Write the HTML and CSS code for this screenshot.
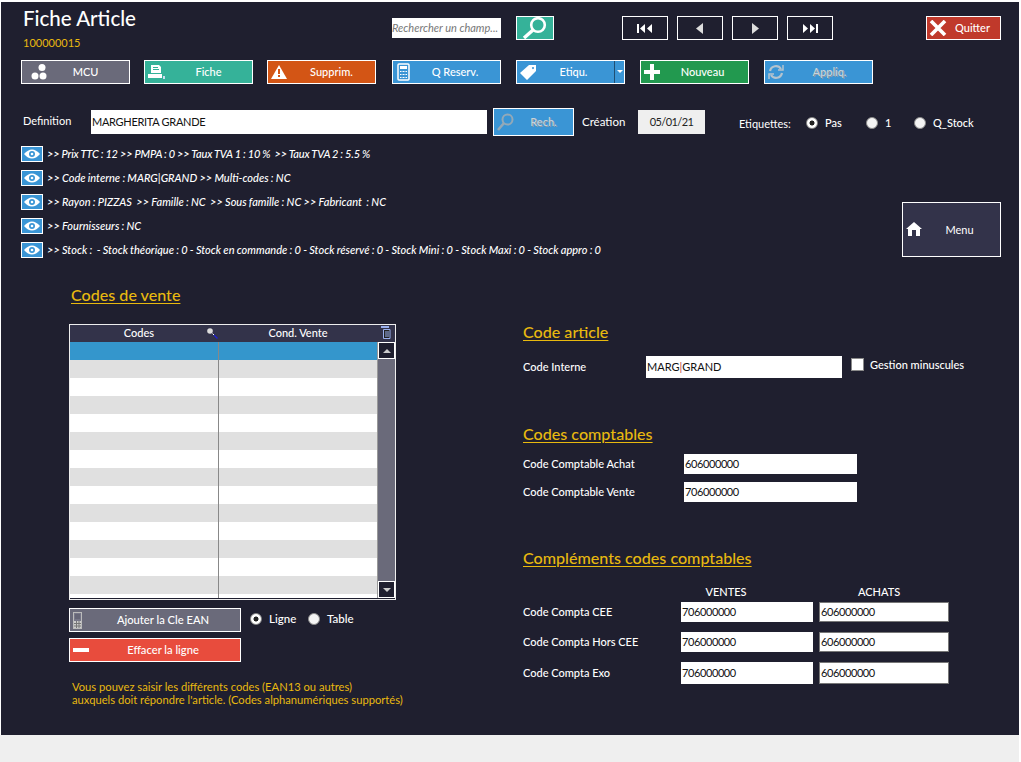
FILE: index.html
```html
<!DOCTYPE html>
<html>
<head>
<meta http-equiv="Content-Type" content="text/html; charset=utf-8"/>
<title>Fiche Article</title>
<link rel="stylesheet" href="styles.css">
</head>
<body>
<div class="panel">

  <div class="top">
    <div class="titles">
      <h1>Fiche Article</h1>
      <div class="ref">100000015</div>
    </div>
    <div class="search-field">Rechercher un champ...</div>
    <button class="btn-find">
      <svg width="36" height="22" viewBox="0 0 36 22"><circle cx="21" cy="8" r="6.800" fill="none" stroke="#fff" stroke-width="2.600"/><path d="M16 13 L7 21" stroke="#fff" stroke-width="3.400"/></svg>
    </button>
    <div class="nav">
      <button class="btn-nav"><svg width="16" height="9" viewBox="0 0 16 9"><path d="M0 0h2v9H0zM8 0v9L3 4.500zM15 0v9L10 4.500z" fill="#fff"/></svg></button>
      <button class="btn-nav"><svg width="8" height="11" viewBox="0 0 8 11"><path d="M7 0v11L0 5.500z" fill="#ddd"/></svg></button>
      <button class="btn-nav"><svg width="8" height="11" viewBox="0 0 8 11"><path d="M1 0v11l7-5.500z" fill="#ddd"/></svg></button>
      <button class="btn-nav"><svg width="16" height="9" viewBox="0 0 16 9"><path d="M1 0v9l5-4.500zM8 0v9l5-4.500zM14 0h2v9h-2z" fill="#fff"/></svg></button>
    </div>
    <button class="btn btn-quit">
      <svg class="ico" width="18" height="16" viewBox="0 0 18 16"><path d="M2 1 L16 15 M16 1 L2 15" stroke="#fff" stroke-width="3.600"/></svg>
      <span>Quitter</span>
    </button>
  </div>

  <div class="actions">
    <button class="btn grey">
      <svg class="ico mcu" width="18" height="16" viewBox="0 0 18 16" fill="#fff"><circle cx="12" cy="3.500" r="3.500"/><circle cx="5" cy="12" r="3.500"/><circle cx="13" cy="12" r="3.500"/></svg>
      <span>MCU</span>
    </button>
    <button class="btn teal">
      <svg class="ico" width="18" height="16" viewBox="0 0 18 16"><path d="M4 1h8l2 2v6H4z" fill="#fff"/><path d="M6 3.500h5M6 5.500h6" stroke="#35b299"/><path d="M1 10h14v4H1z" fill="#fff"/><path d="M16 12h2v3h-2z" fill="#cde"/></svg>
      <span>Fiche</span>
    </button>
    <button class="btn orange">
      <svg class="ico" width="18" height="16" viewBox="0 0 18 16"><path d="M9 1 L17 15 H1z" fill="#fff"/><path d="M8 5h2v5H8zM8 11h2v2H8z" fill="#d35515"/></svg>
      <span>Supprim.</span>
    </button>
    <button class="btn blue">
      <svg class="ico calc" width="14" height="18" viewBox="0 0 14 18"><rect x="1" y="1" width="11" height="16" rx="1" fill="none" stroke="#fff" stroke-width="1.500"/><path d="M3 3h7v3H3z" fill="#fff"/><path d="M3 8h7v1H3zM3 11h7v1H3zM3 14h7v1H3z" fill="#fff"/><path d="M5 8v7M8 8v7" stroke="#3a95d5"/></svg>
      <span>Q Reserv.</span>
    </button>
    <button class="btn blue btn-split">
      <svg class="ico" width="18" height="16" viewBox="0 0 18 16"><path d="M10 1h7v6l-9 9-7-7zM14 3a1 1 0 1 0 .01 0z" fill="#fff" fill-rule="evenodd"/></svg>
      <span>Etiqu.</span>
      <i class="caret"></i>
    </button>
    <button class="btn green">
      <svg class="ico" width="18" height="16" viewBox="0 0 18 16"><path d="M7 0h4v6h6v4h-6v6H7v-6H1V6h6z" fill="#fff"/></svg>
      <span>Nouveau</span>
    </button>
    <button class="btn blue off">
      <svg class="ico" width="18" height="16" viewBox="0 0 18 16" fill="none" stroke="#b5c4ce" stroke-width="2.200"><path d="M3 7a6 6 0 0 1 11-2"/><path d="M15 9a6 6 0 0 1-11 2"/><path d="M11 6h5V1M7 10H2v5" stroke-width="1.500"/></svg>
      <span>Appliq.</span>
    </button>
  </div>

  <div class="defrow">
    <label class="def-label">Definition</label>
    <div class="field def-input">MARGHERITA GRANDE</div>
    <button class="btn blue off btn-rech">
      <svg class="ico" width="18" height="18" viewBox="0 0 18 18"><circle cx="10.500" cy="6.500" r="5" fill="none" stroke="#93a9b8" stroke-width="2"/><path d="M7 10 L1 17" stroke="#93a9b8" stroke-width="2.600"/></svg>
      <span>Rech.</span>
    </button>
    <label class="creat-label">Création</label>
    <div class="date">05/01/21</div>
    <label class="etq-label">Etiquettes:</label>
    <div class="radios">
      <span class="radio-item w-pas"><i class="radio on"></i>Pas</span>
      <span class="radio-item w-one"><i class="radio"></i>1</span>
      <span class="radio-item"><i class="radio"></i>Q_Stock</span>
    </div>
  </div>

  <div class="infos">
    <div class="info-list">
      <div class="info info-tight">
        <button class="eye"><svg width="16" height="12" viewBox="0 0 16 12"><path d="M0 6q8-9 16 0q-8 9-16 0z" fill="#fff"/><circle cx="8" cy="6" r="3" fill="#3a95d5"/><circle cx="8" cy="6" r="1.300" fill="#fff"/></svg></button>
        <span>&gt;&gt; Prix TTC : 12 &gt;&gt; PMPA : 0 &gt;&gt; Taux TVA 1 : 10 % &nbsp;&gt;&gt; Taux TVA 2 : 5.5 %</span>
      </div>
      <div class="info">
        <button class="eye"><svg width="16" height="12" viewBox="0 0 16 12"><path d="M0 6q8-9 16 0q-8 9-16 0z" fill="#fff"/><circle cx="8" cy="6" r="3" fill="#3a95d5"/><circle cx="8" cy="6" r="1.300" fill="#fff"/></svg></button>
        <span>&gt;&gt; Code interne : MARG|GRAND &gt;&gt; Multi-codes : NC</span>
      </div>
      <div class="info">
        <button class="eye"><svg width="16" height="12" viewBox="0 0 16 12"><path d="M0 6q8-9 16 0q-8 9-16 0z" fill="#fff"/><circle cx="8" cy="6" r="3" fill="#3a95d5"/><circle cx="8" cy="6" r="1.300" fill="#fff"/></svg></button>
        <span>&gt;&gt; Rayon : PIZZAS &nbsp;&gt;&gt; Famille : NC &nbsp;&gt;&gt; Sous famille : NC &gt;&gt; Fabricant &nbsp;: NC</span>
      </div>
      <div class="info">
        <button class="eye"><svg width="16" height="12" viewBox="0 0 16 12"><path d="M0 6q8-9 16 0q-8 9-16 0z" fill="#fff"/><circle cx="8" cy="6" r="3" fill="#3a95d5"/><circle cx="8" cy="6" r="1.300" fill="#fff"/></svg></button>
        <span>&gt;&gt; Fournisseurs : NC</span>
      </div>
      <div class="info">
        <button class="eye"><svg width="16" height="12" viewBox="0 0 16 12"><path d="M0 6q8-9 16 0q-8 9-16 0z" fill="#fff"/><circle cx="8" cy="6" r="3" fill="#3a95d5"/><circle cx="8" cy="6" r="1.300" fill="#fff"/></svg></button>
        <span>&gt;&gt; Stock : &nbsp;- Stock théorique : 0 - Stock en commande : 0 - Stock réservé : 0 - Stock Mini : 0 - Stock Maxi : 0 - Stock appro : 0</span>
      </div>
    </div>
    <button class="btn-menu">
      <svg width="16" height="15" viewBox="0 0 16 15"><path d="M8 0 L16 7 H14 V14 H2 V7 H0z" fill="#fff"/><path d="M6 8h4v6H6z" fill="#33334a"/></svg>
      <span>Menu</span>
    </button>
  </div>

  <div class="lower">
    <div class="col-left">
      <h2 class="head head-vente">Codes de vente</h2>
      <div class="tbl">
        <div class="tbl-head">
          <div class="th th-codes"><span class="th-txt">Codes</span>
            <svg class="th-ico" width="11" height="11" viewBox="0 0 11 11"><circle cx="3" cy="3" r="2.800" fill="#ddd"/><path d="M5.500 5.500 L10 10" stroke="#fff" stroke-width="1"/><path d="M7 7 L10.500 10.500" stroke="#22c" stroke-width="1.500"/></svg>
          </div>
          <div class="th th-cond">Cond. Vente</div>
          <svg class="th-del" width="10" height="13" viewBox="0 0 10 13"><path d="M0 0h8v2H0z" fill="#9ab0ee"/><path d="M2.500 3.500h6.500v9H2.500z" fill="#222" stroke="#9ab0ee"/><path d="M4 6h4M4 8h4M4 10h4" stroke="#9ab0ee"/></svg>
        </div>
        <div class="tbl-body">
          <div class="rows">
            <div class="row sel"></div>
            <div class="row alt"></div>
            <div class="row"></div>
            <div class="row alt"></div>
            <div class="row"></div>
            <div class="row alt"></div>
            <div class="row"></div>
            <div class="row alt"></div>
            <div class="row"></div>
            <div class="row alt"></div>
            <div class="row"></div>
            <div class="row alt"></div>
            <div class="row"></div>
            <div class="row alt"></div>
            <div class="row end"></div>
          </div>
          <div class="scroll">
            <div class="sb-btn"><i class="arr-up"></i></div>
            <div class="sb-btn"><i class="arr-down"></i></div>
          </div>
        </div>
      </div>
      <div class="under">
        <div class="under-btns">
          <button class="btn grey btn-wide">
            <svg class="ico" width="12" height="18" viewBox="0 0 12 18"><rect x="1.500" y="0.500" width="8" height="16" fill="#777788" stroke="#bbb"/><path d="M3 2h5v5H3z" fill="#666677"/><path d="M2 9h7v7H2z" fill="#ccc"/><path d="M2 11.500h7M2 14h7M4.500 9v7M7 9v7" stroke="#777"/></svg>
            <span>Ajouter la Cle EAN</span>
          </button>
          <button class="btn red btn-wide">
            <svg class="ico" width="18" height="16" viewBox="0 0 18 16"><path d="M1 6h16v4H1z" fill="#fff"/></svg>
            <span>Effacer la ligne</span>
          </button>
        </div>
        <div class="radios radios-sm">
          <span class="radio-item w-ligne"><i class="radio on"></i>Ligne</span>
          <span class="radio-item"><i class="radio"></i>Table</span>
        </div>
      </div>
      <p class="note">Vous pouvez saisir les différents codes (EAN13 ou autres)<br>auxquels doit répondre l'article. (Codes alphanumériques supportés)</p>
    </div>

    <div class="col-right">
      <h2 class="head head-article">Code article</h2>
      <div class="form-row row-interne">
        <label class="lbl w-interne">Code Interne</label>
        <div class="field f-interne">MARG<em class="pipe">|</em>GRAND</div>
        <i class="check"></i>
        <span class="lbl check-lbl">Gestion minuscules</span>
      </div>

      <h2 class="head head-compta">Codes comptables</h2>
      <div class="form-row row-achat">
        <label class="lbl w-compta">Code Comptable Achat</label>
        <div class="field f-compta">606000000</div>
      </div>
      <div class="form-row row-vente">
        <label class="lbl w-compta">Code Comptable Vente</label>
        <div class="field f-compta">706000000</div>
      </div>

      <h2 class="head head-compl">Compléments codes comptables</h2>
      <div class="grid-compl">
        <span></span><span class="colhead">VENTES</span><span class="colhead">ACHATS</span>
        <label class="lbl">Code Compta CEE</label>
        <div class="field">706000000</div>
        <div class="field boxed">606000000</div>
        <label class="lbl">Code Compta Hors CEE</label>
        <div class="field">706000000</div>
        <div class="field boxed">606000000</div>
        <label class="lbl">Code Compta Exo</label>
        <div class="field tall">706000000</div>
        <div class="field boxed tall">606000000</div>
      </div>
    </div>
  </div>

</div>
<div class="strip"></div>
</body>
</html>
```

FILE: styles.css
```css
html, body {
  margin: 0;
  height: 100%;
}

body {
  background-color: #fff;
  font-family: Lato, sans-serif;
  font-size: 11px;
  color: #fff;
  overflow: hidden;
  padding-top: 2px;
  box-sizing: border-box;
  height: 762px;
}

button {
  font-family: Lato, sans-serif;
  padding: 0;
  cursor: pointer;
}

.panel {
  background-color: #1f1f2f;
  margin: 0 2px 0 1px;
  height: 733px;
  position: relative;
  box-sizing: border-box;
}

.strip {
  height: 27px;
  margin-right: 2px;
  background-color: #efefef;
}

/* top bar */
.top {
  display: flex;
  align-items: flex-start;
  height: 58px;
  padding-left: 22px;
}

.titles {
  width: 369px;
  padding-top: 3px;
}

h1 {
  font-size: 20.5px;
  font-weight: 500;
  line-height: 26px;
  margin: 0;
}

.ref {
  font-size: 11px;
  color: #e8b90f;
  margin-top: 5px;
  line-height: 14px;
}

.search-field {
  margin-top: 16px;
  width: 109px;
  height: 20px;
  background: #fff;
  color: #777;
  font-style: italic;
  font-size: 11px;
  line-height: 20px;
  overflow: hidden;
  white-space: nowrap;
}

.btn-find {
  margin: 14px 0 0 15px;
  width: 38px;
  height: 24px;
  background: #35b299;
  border: 1px solid #fff;
  display: flex;
  align-items: center;
  justify-content: center;
}

.nav {
  display: flex;
  gap: 9px;
  margin: 14px 0 0 68px;
}

.btn-nav {
  width: 46px;
  height: 24px;
  background: transparent;
  border: 1px solid #fff;
  display: flex;
  align-items: center;
  justify-content: center;
}

.btn {
  position: relative;
  display: flex;
  align-items: center;
  justify-content: center;
  box-sizing: border-box;
  width: 109px;
  height: 24px;
  padding-bottom: 2px;
  border: 1px solid #fff;
  color: #fff;
  font-size: 11px;
  font-weight: 500;
}

.btn .ico {
  position: absolute;
  left: 2px;
  top: 3px;
}

.btn .ico.mcu {
  left: 8px;
}

.btn .ico.calc {
  left: 4px;
  top: 2px;
}

.btn-quit {
  width: 75px;
  margin: 14px 0 0 93px;
  background: #c0392b;
  padding-left: 18px;
  font-size: 11px;
}

.grey { background: #6a6a7a; }
.teal { background: #35b299; }
.orange { background: #d35515; }
.blue { background: #3a95d5; }
.green { background: #22994f; }
.red { background: #e84c3d; }

.off span {
  color: #c5d3dc;
  text-shadow: 1px 1px 0 #8a9aa6;
}

/* action buttons */
.actions {
  display: flex;
  height: 24px;
  padding-left: 20px;
}

.actions .btn {
  margin-right: 14px;
  padding-left: 20px;
}

.actions .btn:nth-child(3) {
  margin-right: 16px;
}

.actions .btn:nth-child(4) {
  margin-right: 15px;
  padding-left: 17px;
}

.actions .btn:nth-child(5) {
  margin-right: 15px;
}

.actions .btn:nth-child(6) {
  margin-right: 15px;
  padding-left: 16px;
}

.actions .btn:nth-child(7) {
  padding-left: 22px;
}

.actions .btn-split {
  padding-right: 14px;
}

.caret {
  position: absolute;
  right: 0;
  top: 0;
  bottom: 0;
  width: 9px;
  border-left: 1px solid #1f4f74;
}

.caret::after {
  content: "";
  position: absolute;
  left: 2px;
  top: 9px;
  border: 3px solid transparent;
  border-top: 3px solid #fff;
}

/* definition row */
.defrow {
  display: flex;
  align-items: center;
  height: 28px;
  margin-top: 24px;
  padding-left: 22px;
}

.def-label {
  width: 68px;
  margin-top: -3px;
}

.field {
  background: #fff;
  color: #111;
  height: 20px;
  line-height: 20px;
  padding-left: 1px;
  box-sizing: border-box;
  font-size: 11px;
  letter-spacing: -0.4px;
  white-space: nowrap;
}

.def-input {
  width: 396px;
  height: 24px;
  line-height: 24px;
  letter-spacing: -0.3px;
}

.btn-rech {
  width: 81px;
  height: 28px;
  margin-left: 6px;
  padding-left: 20px;
}

.btn-rech .ico {
  left: 3px;
  top: 4px;
}

.creat-label {
  margin-left: 8px;
  width: 56px;
  margin-top: -2px;
  font-size: 11.5px;
}

.date {
  width: 67px;
  height: 24px;
  line-height: 24px;
  background: #efefef;
  color: #222;
  text-align: center;
  letter-spacing: -0.6px;
}

.etq-label {
  margin-left: 34px;
  width: 67px;
  margin-top: 2px;
}

.radios {
  display: flex;
  align-items: center;
  font-weight: 500;
  margin-top: 1px;
}

.radio-item {
  display: flex;
  align-items: center;
  gap: 7px;
}

.w-pas { width: 60px; }
.w-one { width: 48px; }

.radio {
  display: block;
  box-sizing: border-box;
  width: 12px;
  height: 12px;
  border-radius: 50%;
  background: #f4f4f4;
  border: 1px solid #8a8a8a;
}

.radio.on {
  background: radial-gradient(circle, #222 0, #222 2.200px, #fff 2.800px);
}

/* information lines */
.infos {
  display: flex;
  margin-top: 9px;
  padding-left: 20px;
}

.info-list {
  width: 881px;
  margin-top: 1px;
}

.info {
  display: flex;
  align-items: center;
  height: 16px;
  margin-bottom: 8px;
  font-style: italic;
  font-size: 11px;
  font-weight: 500;
  word-spacing: -0.300px;
}

.info span {
  margin-top: -2px;
}

.info-tight {
  letter-spacing: -0.150px;
}

.eye {
  width: 22px;
  height: 16px;
  background: #3a95d5;
  border: 1px solid #fff;
  margin-right: 4px;
  display: flex;
  align-items: center;
  justify-content: center;
}

.btn-menu {
  position: relative;
  align-self: flex-start;
  margin-top: 57px;
  width: 99px;
  height: 55px;
  background: #33334a;
  border: 1px solid #fff;
  color: #fff;
  font-size: 11px;
  padding-left: 16px;
}

.btn-menu svg {
  position: absolute;
  left: 3px;
  top: 19px;
}

/* lower part */
.lower {
  position: relative;
  display: flex;
}

.head {
  color: #e8b90f;
  font-size: 16.100px;
  font-weight: 500;
  text-decoration: underline;
  text-decoration-thickness: 1px;
  text-underline-offset: 2px;
  line-height: 18px;
  margin: 0;
}

.col-left {
  width: 454px;
  padding-left: 68px;
  box-sizing: border-box;
}

.head-vente {
  margin: 20px 0 0 2px;
}

.tbl {
  margin-top: 20px;
  width: 327px;
  border: 1px solid #eee;
  box-sizing: border-box;
  height: 276px;
  overflow: hidden;
}

.tbl-head {
  position: relative;
  display: flex;
  height: 17px;
  background: #33334a;
  font-size: 11px;
  font-weight: 500;
  line-height: 16px;
  text-align: center;
}

.th {
  position: relative;
}

.th-codes { width: 148px; }
.th-cond { width: 160px; }

.th-txt {
  display: block;
  padding-right: 10px;
}

.th-ico {
  position: absolute;
  right: 0;
  top: 3px;
}

.th-del {
  position: absolute;
  right: 4px;
  top: 1px;
}

.tbl-body {
  display: flex;
}

.rows {
  width: 307px;
  background: #fff;
}

.row {
  position: relative;
  height: 18px;
}

.row::after {
  content: "";
  position: absolute;
  left: 148px;
  top: 0;
  bottom: 0;
  width: 1px;
  background: #888;
}

.row.sel { background: #3496cc; }
.row.alt { background: #e0e0e0; }
.row.end { height: 4px; }

.scroll {
  width: 18px;
  box-sizing: border-box;
  border-left: 1px solid #999;
  background: #6a6a7a;
  display: flex;
  flex-direction: column;
  justify-content: space-between;
  height: 256px;
}

.sb-btn {
  height: 17px;
  box-sizing: border-box;
  background: #1f1f2f;
  border: 1px solid #fff;
  display: flex;
  align-items: center;
  justify-content: center;
}

.arr-up {
  border: 4px solid transparent;
  border-bottom: 4px solid #ccc;
  border-top: 0;
}

.arr-down {
  border: 4px solid transparent;
  border-top: 4px solid #ccc;
  border-bottom: 0;
}

.under {
  display: flex;
  margin-top: 8px;
}

.under-btns {
  display: flex;
  flex-direction: column;
  gap: 6px;
}

.btn-wide {
  width: 172px;
  font-size: 11.200px;
  padding-left: 16px;
}

.radios-sm {
  align-self: flex-start;
  margin: 4px 0 0 9px;
  font-size: 11.5px;
}

.w-ligne { width: 58px; }

.note {
  margin: 18px 0 0 3px;
  color: #e8b90f;
  font-size: 11.2px;
  line-height: 13px;
}

.col-right {
  padding-left: 68px;
  flex: 1;
}

.form-row {
  display: flex;
  align-items: center;
}

.lbl {
  font-size: 11px;
  font-weight: 500;
  margin-top: -2px;
}

.head-article {
  margin-top: 57px;
}

.row-interne {
  margin-top: 15px;
  height: 22px;
}

.w-interne { width: 123px; }

.f-interne {
  width: 196px;
  height: 22px;
  line-height: 22px;
  letter-spacing: 0;
}

.pipe {
  color: #b44;
  font-style: normal;
}

.check {
  display: block;
  box-sizing: border-box;
  width: 13px;
  height: 13px;
  background: #fff;
  border: 1px solid #8a8a8a;
  margin: -5px 6px 0 9px;
}

.check-lbl {
  margin-left: 0;
  margin-top: -6px;
}

.head-compta {
  margin-top: 47px;
}

.row-achat { margin-top: 11px; }
.row-vente { margin-top: 8px; }
.w-compta { width: 161px; }

.f-compta {
  width: 173px;
}

.head-compl {
  margin-top: 47px;
}

.grid-compl {
  display: grid;
  grid-template-columns: 152px 132px 130px;
  column-gap: 6px;
  row-gap: 10px;
  margin-top: 19px;
  align-items: center;
}

.colhead {
  text-align: center;
  font-weight: 500;
  font-size: 11px;
  line-height: 12px;
  margin: 0 0 -6px;
}

.colhead:nth-child(2) { padding-right: 42px; }
.colhead:nth-child(3) { padding-right: 10px; }

.boxed {
  border: 1px solid #777;
  line-height: 18px;
}

.tall {
  height: 22px;
  line-height: 22px;
}

.boxed.tall {
  line-height: 20px;
}
```
